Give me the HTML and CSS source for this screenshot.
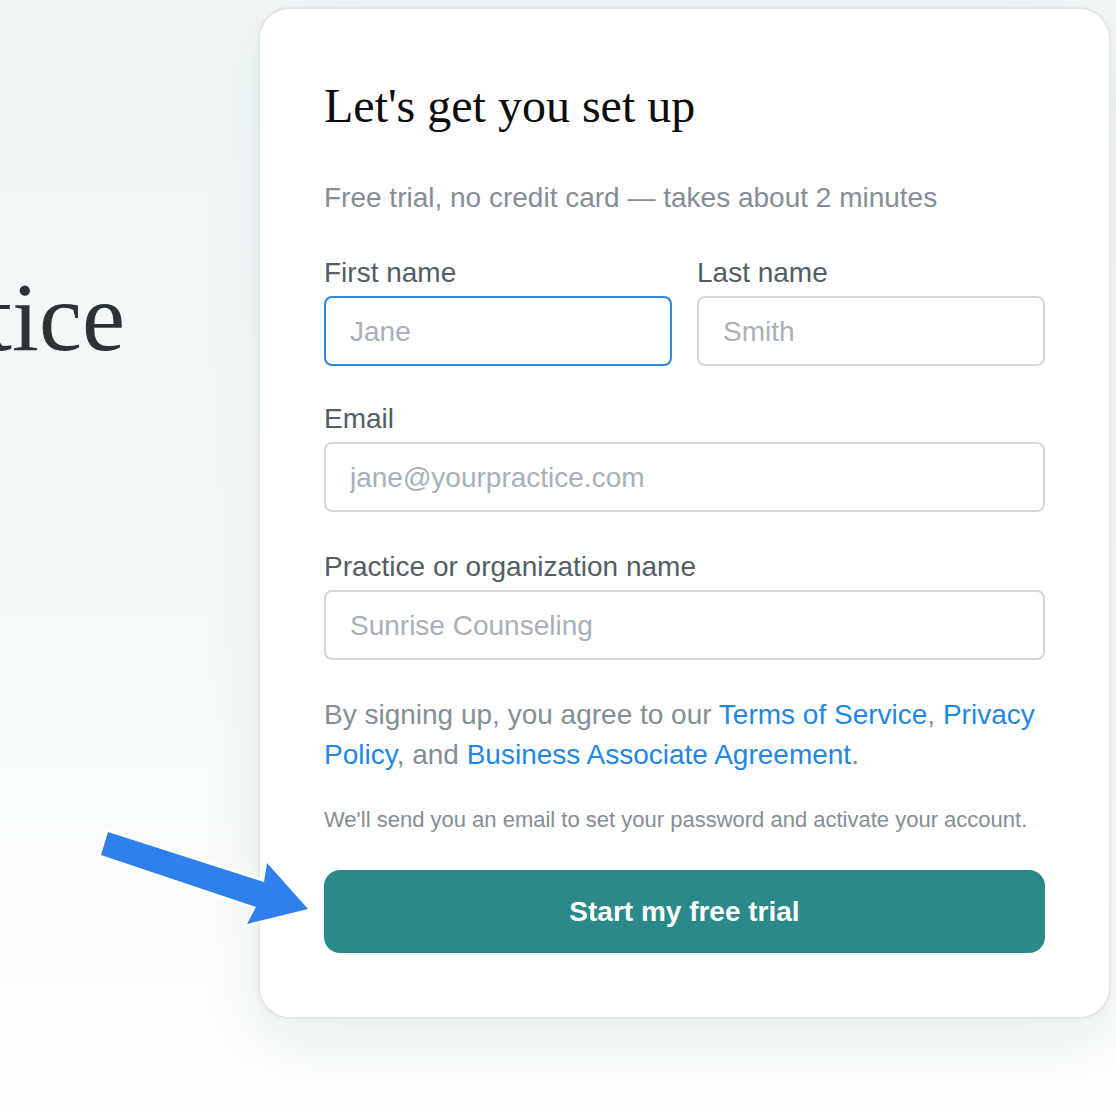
FILE: index.html
```html
<!DOCTYPE html>
<html lang="en">
<head>
<meta charset="utf-8">
<title>Let's get you set up</title>
<link rel="stylesheet" href="styles.css">
</head>
<body>
<main class="page">
  <section class="hero">
    <h1 class="hero-title">practice</h1>
  </section>
  <section class="card">
    <h2 class="card-title">Let's get you set up</h2>
    <p class="card-sub">Free trial, no credit card — takes about 2 minutes</p>
    <form class="form">
      <div class="row">
        <label class="field">
          <span class="label">First name</span>
          <input class="input is-focused" type="text" placeholder="Jane">
        </label>
        <label class="field">
          <span class="label">Last name</span>
          <input class="input" type="text" placeholder="Smith">
        </label>
      </div>
      <label class="field">
        <span class="label">Email</span>
        <input class="input" type="email" placeholder="jane@yourpractice.com">
      </label>
      <label class="field">
        <span class="label">Practice or organization name</span>
        <input class="input" type="text" placeholder="Sunrise Counseling">
      </label>
      <p class="terms">By signing up, you agree to our <a href="#">Terms of Service</a>, <a href="#">Privacy Policy</a>, and <a href="#">Business Associate Agreement</a>.</p>
      <p class="note">We'll send you an email to set your password and activate your account.</p>
      <button class="submit" type="button">Start my free trial</button>
    </form>
  </section>
  <svg class="pointer" width="240" height="120" viewBox="0 0 240 120" aria-hidden="true">
    <polygon points="18,12 174,62 177,43 218,89 157,104 166,87 11,35" fill="#2f80ed" stroke="#ffffff" stroke-width="5" stroke-linejoin="miter" paint-order="stroke fill"/>
  </svg>
</main>
</body>
</html>
```

FILE: styles.css
```css
* { box-sizing: border-box; }

html, body {
  margin: 0;
  padding: 0;
}

body {
  min-height: 1112px;
  background: linear-gradient(180deg, #f0f6f6 0%, #f6f9fa 55%, #fdfefe 100%);
  font-family: "Liberation Sans", Arial, sans-serif;
  color: #4f5a61;
}

.page {
  position: relative;
  display: flex;
  align-items: flex-start;
  min-height: 1112px;
}

.hero {
  width: 125px;
  flex: 0 0 125px;
  overflow: hidden;
  display: flex;
  justify-content: flex-end;
  padding-top: 263px;
}

.hero-title {
  margin: 0;
  font-family: "Liberation Serif", "Times New Roman", serif;
  font-weight: 400;
  font-size: 97px;
  line-height: 110px;
  color: #2b3336;
  white-space: nowrap;
  flex: 0 0 auto;
}

.card {
  margin-left: 133px;
  margin-top: 7px;
  width: 853px;
  flex: 0 0 853px;
  background: #ffffff;
  border: 2px solid #e4e7e9;
  border-radius: 32px;
  padding: 69px 64px 64px 64px;
  box-shadow: 0 24px 64px rgba(30, 50, 50, 0.07), 0 2px 8px rgba(30, 50, 50, 0.03);
}

.card-title {
  margin: 0;
  font-family: "Liberation Serif", "Times New Roman", serif;
  font-weight: 400;
  font-size: 48px;
  line-height: 56px;
  color: #0d0d0d;
}

.card-sub {
  margin: 48px 0 0 0;
  font-size: 28px;
  line-height: 32px;
  color: #868e95;
}

.form {
  margin-top: 43px;
  display: flex;
  flex-direction: column;
}

.row {
  display: grid;
  grid-template-columns: 1fr 1fr;
  column-gap: 25px;
}

.field {
  display: flex;
  flex-direction: column;
  gap: 7px;
  margin-bottom: 39px;
}

.row .field {
  margin-bottom: 37px;
}

.label {
  font-size: 28px;
  line-height: 32px;
  color: #535d64;
}

.input {
  height: 70px;
  width: 100%;
  border: 2px solid #d3d7db;
  border-radius: 8px;
  padding: 2px 24px 0 24px;
  font-family: "Liberation Sans", Arial, sans-serif;
  font-size: 28px;
  color: #333;
  background: #fff;
  outline: none;
}

.input::placeholder {
  color: #a9b0b7;
}

.input.is-focused {
  border-color: #2b87e0;
}

.terms {
  margin: -4px 0 0 0;
  font-size: 28px;
  line-height: 40px;
  color: #868e95;
}

.terms a {
  color: #1f87e5;
  text-decoration: none;
}

.note {
  margin: 32px 0 0 0;
  font-size: 22px;
  line-height: 26px;
  color: #868e95;
}

.submit {
  margin-top: 37px;
  height: 83px;
  width: 100%;
  border: none;
  border-radius: 16px;
  background: #2b8a89;
  color: #ffffff;
  font-family: "Liberation Sans", Arial, sans-serif;
  font-weight: 700;
  font-size: 28px;
  padding-top: 2px;
  cursor: pointer;
}

.pointer {
  position: absolute;
  left: 90px;
  top: 820px;
}
```
